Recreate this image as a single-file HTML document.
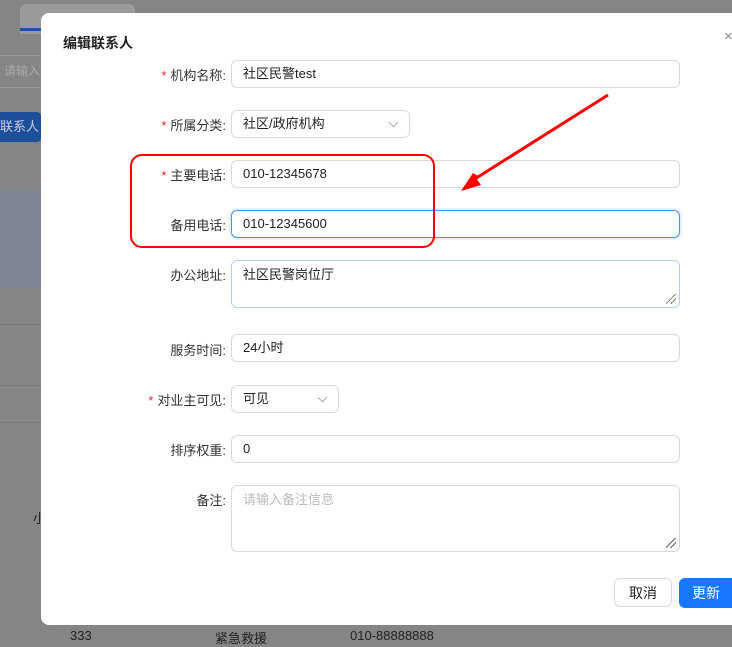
<!DOCTYPE html>
<html><head><meta charset="utf-8"><style>
body{margin:0;width:732px;height:642px;overflow:hidden;background:#858585;font-family:"Liberation Sans","Noto Sans CJK SC",sans-serif;position:relative}
.a{position:absolute}
.modal{left:41px;top:13px;width:720px;height:612px;background:#fff;border-radius:8px}
.lbl{position:absolute;right:506px;font-size:13px;color:#333;text-align:right;white-space:nowrap}
.lbl b{color:#f5222d;font-weight:normal;margin-right:4px}
.in{position:absolute;left:231px;width:449px;height:28px;border:1px solid #d9d9d9;border-radius:6px;background:#fff;font-size:13px;color:#222;line-height:26px;padding-left:11px;box-sizing:border-box}
.sel:after{content:"";position:absolute;right:12px;top:8px;width:6px;height:6px;border-right:1px solid #aaa;border-bottom:1px solid #aaa;transform:rotate(45deg)}
.rz{position:absolute;right:3px;bottom:3px;width:10px;height:10px;background:linear-gradient(135deg,transparent 45%,#666 45%,#666 52%,transparent 52%,transparent 70%,#666 70%,#666 77%,transparent 77%)}
</style></head><body>
<div class="a" style="left:20px;top:4px;width:115px;height:30px;background:#9a9a9a;border-radius:6px 6px 0 0"></div>
<div class="a" style="left:20px;top:28px;width:22px;height:3px;background:#1e4fa0"></div>
<div class="a" style="left:0;top:55px;width:41px;height:33px;border-top:1px solid #999;border-bottom:1px solid #999;color:#aaa;font-size:12px;line-height:31px;padding-left:4px;box-sizing:border-box;white-space:nowrap;overflow:hidden">请输入</div>
<div class="a" style="left:0;top:112px;width:41px;height:30px;background:#1d4f9a;color:#ccd;font-size:13px;line-height:30px;border-radius:0 4px 4px 0;white-space:nowrap;overflow:hidden">联系人</div>
<div class="a" style="left:0;top:190px;width:41px;height:98px;background:#7c8591"></div>
<div class="a" style="left:0;top:324px;width:41px;height:1px;background:#7a7a7a"></div>
<div class="a" style="left:0;top:385px;width:41px;height:1px;background:#7a7a7a"></div>
<div class="a" style="left:0;top:422px;width:41px;height:1px;background:#7a7a7a"></div>
<div class="a" style="left:33px;top:508px;font-size:13px;color:#222">小</div>
<div class="a" style="left:70px;top:628px;font-size:13px;color:#222">333</div>
<div class="a" style="left:215px;top:628px;font-size:13px;color:#222">紧急救援</div>
<div class="a" style="left:350px;top:628px;font-size:13px;color:#222">010-88888888</div>
<div class="a modal"></div>
<div class="a" style="left:63px;top:33px;font-size:14px;font-weight:bold;color:#222">编辑联系人</div>
<div class="a" style="left:724px;top:28px;font-size:15px;color:#888">×</div>

<div class="lbl" style="top:65px"><b>*</b>机构名称:</div>
<div class="in" style="top:60px">社区民警test</div>
<div class="lbl" style="top:115px"><b>*</b>所属分类:</div>
<div class="in sel" style="top:110px;width:179px">社区/政府机构</div>
<div class="lbl" style="top:165px"><b>*</b>主要电话:</div>
<div class="in" style="top:160px">010-12345678</div>
<div class="lbl" style="top:215px">备用电话:</div>
<div class="in" style="top:210px;border-color:#4096ff;box-shadow:0 0 0 2px #e6f0ff">010-12345600</div>
<div class="lbl" style="top:265px">办公地址:</div>
<div class="in" style="top:260px;height:48px;line-height:28px;border-color:#b7ccef">社区民警岗位厅<div class="rz"></div></div>
<div class="lbl" style="top:340px">服务时间:</div>
<div class="in" style="top:334px">24小时</div>
<div class="lbl" style="top:390px"><b>*</b>对业主可见:</div>
<div class="in sel" style="top:385px;width:108px">可见</div>
<div class="lbl" style="top:440px">排序权重:</div>
<div class="in" style="top:435px">0</div>
<div class="lbl" style="top:490px">备注:</div>
<div class="in" style="top:485px;height:67px;line-height:28px;color:#bbb">请输入备注信息<div class="rz"></div></div>

<div class="a" style="left:614px;top:578px;width:58px;height:29px;border:1px solid #d9d9d9;border-radius:6px;font-size:14px;line-height:28px;text-align:center;color:#222;box-sizing:border-box">取消</div>
<div class="a" style="left:679px;top:578px;width:60px;height:30px;background:#1677ff;border-radius:6px;font-size:14px;line-height:30px;color:#fff;padding-left:13px;box-sizing:border-box">更新</div>

<div class="a" style="left:130px;top:154px;width:301px;height:90px;border:2.5px solid #f00;border-radius:12px"></div>
<svg class="a" style="left:0;top:0" width="732" height="642"><polygon points="608,95 476,178 481,185 461,191 473,173 478,176" fill="#f00"/><line x1="608" y1="95" x2="470" y2="182" stroke="#f00" stroke-width="3"/></svg>
</body></html>
